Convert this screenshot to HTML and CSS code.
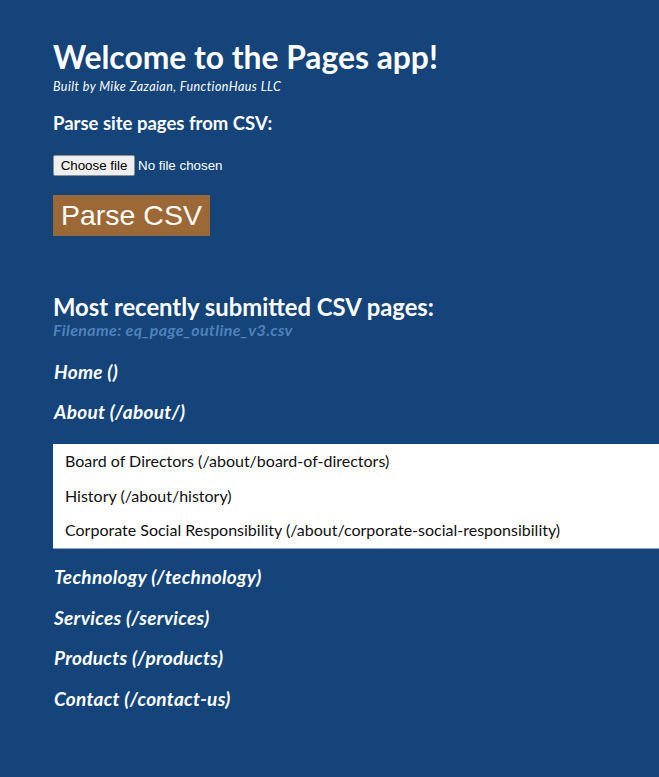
FILE: index.html
```html
<!DOCTYPE html>
<html>
<head>
<meta charset="utf-8">
<link rel="stylesheet" href="styles.css">
</head>
<body>
<main class="app">
  <h1 class="title">Welcome to the Pages app!</h1>
  <p class="byline">Built by Mike Zazaian, FunctionHaus LLC</p>
  <h3 class="section-label">Parse site pages from CSV:</h3>
  <form class="upload">
    <label class="file-row">
      <input type="file" class="file-input">
      <span class="file-btn">Choose file</span>
      <span class="file-status">No file chosen</span>
    </label>
    <button type="button" class="parse-btn">Parse CSV</button>
  </form>
  <h2 class="recent-title">Most recently submitted CSV pages:</h2>
  <p class="filename">Filename: eq_page_outline_v3.csv</p>
  <ul class="pages">
    <li class="page">Home ()</li>
    <li class="page">About (/about/)
      <ul class="subpages">
        <li class="subpage">Board of Directors (/about/board-of-directors)</li>
        <li class="subpage">History (/about/history)</li>
        <li class="subpage">Corporate Social Responsibility (/about/corporate-social-responsibility)</li>
      </ul>
    </li>
    <li class="page">Technology (/technology)</li>
    <li class="page">Services (/services)</li>
    <li class="page">Products (/products)</li>
    <li class="page">Contact (/contact-us)</li>
  </ul>
</main>
</body>
</html>
```
FILE: styles.css
```css
html, body {
  margin: 0;
  padding: 0;
  background: #144479;
}
body {
  font-family: Lato, "Open Sans", sans-serif;
  color: #ffffff;
  min-height: 777px;
}
.app {
  padding: 38px 0 40px 53px;
}
.title {
  font-size: 31.8px;
  font-weight: 700;
  margin: 0;
  line-height: 38px;
}
.byline {
  font-size: 12.5px;
  font-style: italic;
  letter-spacing: 0.45px;
  margin: 3px 0 0 0;
  line-height: 15px;
}
.section-label {
  font-size: 18.5px;
  font-weight: 700;
  margin: 16.5px 0 0 0;
  line-height: 24px;
}
.upload {
  display: flex;
  flex-direction: column;
  align-items: flex-start;
  margin-top: 20px;
}
.file-row {
  display: flex;
  align-items: center;
  gap: 3px;
  height: 21px;
  font-family: "Liberation Sans", Arial, sans-serif;
  font-size: 13.33px;
}
.file-input {
  display: none;
}
.file-btn {
  box-sizing: border-box;
  height: 21px;
  width: 82px;
  display: flex;
  align-items: center;
  justify-content: center;
  background: #efefef;
  color: #000000;
  border: 1px solid #8f8f8f;
  border-radius: 2px;
}
.file-status {
  color: #ffffff;
}
.parse-btn {
  margin-top: 19px;
  background: #9b6836;
  color: #ffffff;
  border: none;
  font-family: "Liberation Sans", Arial, sans-serif;
  font-size: 28.5px;
  padding: 4px 8px;
  line-height: 33px;
}
.recent-title {
  font-size: 23.8px;
  font-weight: 700;
  margin: 56px 0 0 0;
  line-height: 30px;
}
.filename {
  font-size: 16px;
  font-style: italic;
  font-weight: 700;
  letter-spacing: 0.35px;
  color: #4f82bc;
  margin: 0;
  line-height: 16px;
}
.pages {
  list-style: none;
  margin: 22px 0 0 0;
  padding: 0;
}
.page {
  font-size: 19px;
  font-style: italic;
  font-weight: 700;
  letter-spacing: 0.3px;
  line-height: 24px;
  margin-bottom: 16.5px;
  padding-left: 1px;
}
.subpages {
  list-style: none;
  margin: 20px 0 0 -1px;
  padding: 0 0 0 12px;
  background: #ffffff;
  color: #111111;
  border-bottom: 1px solid #8aa4c4;
  letter-spacing: 0;
}
.subpage {
  font-size: 16px;
  font-style: normal;
  font-weight: 400;
  line-height: 20px;
  padding: 7.25px 0;
}
```
